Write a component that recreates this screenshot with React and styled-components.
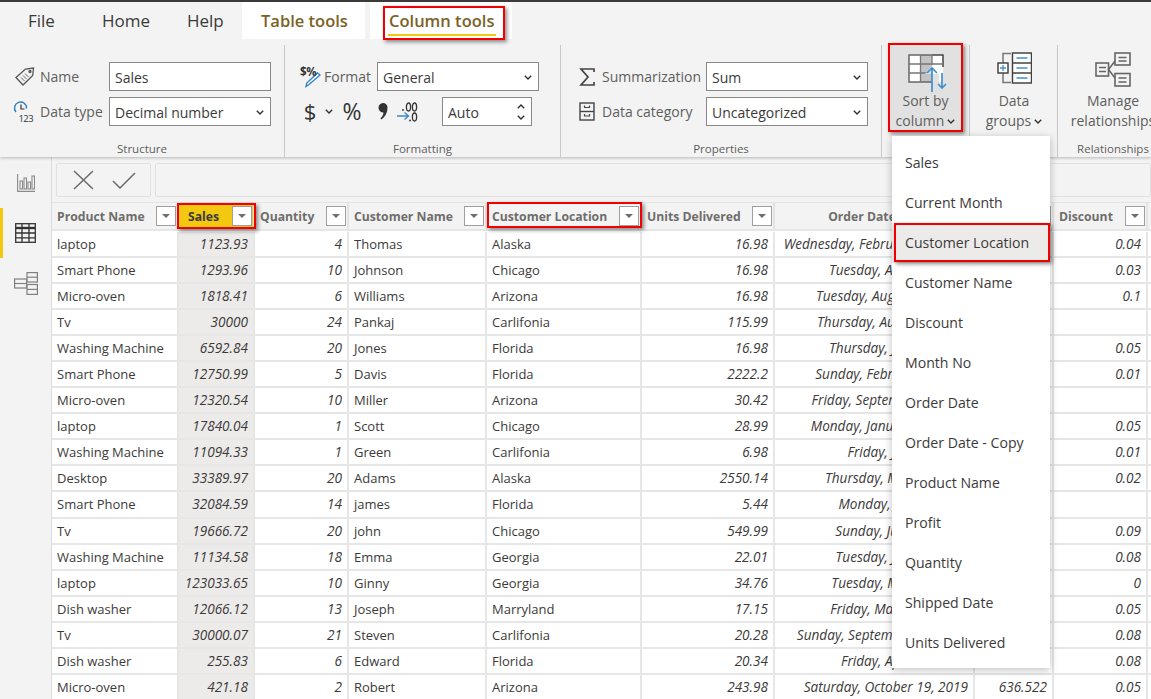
import React from "react";
import styled, { createGlobalStyle } from "styled-components";

const GlobalStyle = createGlobalStyle`
  html, body {
    margin: 0;
    padding: 0;
    background: #ffffff;
  }
  body {
    font-family: "Open Sans", "Noto Sans", sans-serif;
    color: #3b3a39;
    overflow: hidden;
  }
`;

const columns = [
  { key: "product", title: "Product Name", width: 127 },
  { key: "sales", title: "Sales", width: 76, align: "right", selected: true, mark: { top: 0, left: -2, right: -3, bottom: 0 } },
  { key: "qty", title: "Quantity", width: 94, align: "right" },
  { key: "customer", title: "Customer Name", width: 138 },
  { key: "location", title: "Customer Location", width: 155, mark: { top: -1, left: 0, right: -2, bottom: 1 } },
  { key: "units", title: "Units Delivered", width: 133, align: "right" },
  { key: "date", title: "Order Date", width: 200, align: "right", center: true },
  { key: "profit", title: "Profit", width: 79, align: "right" },
  { key: "discount", title: "Discount", width: 94, align: "right" },
  { key: "next", title: "", width: 60 },
];

const rows = [
  ["laptop", "1123.93", "4", "Thomas", "Alaska", "16.98", "Wednesday, February 20, 2019", "", "0.04"],
  ["Smart Phone", "1293.96", "10", "Johnson", "Chicago", "16.98", "Tuesday, April 30, 2019", "", "0.03"],
  ["Micro-oven", "1818.41", "6", "Williams", "Arizona", "16.98", "Tuesday, August 27, 2019", "", "0.1"],
  ["Tv", "30000", "24", "Pankaj", "Carlifonia", "115.99", "Thursday, August 8, 2019", "", ""],
  ["Washing Machine", "6592.84", "20", "Jones", "Florida", "16.98", "Thursday, July 18, 2019", "", "0.05"],
  ["Smart Phone", "12750.99", "5", "Davis", "Florida", "2222.2", "Sunday, February 3, 2019", "", "0.01"],
  ["Micro-oven", "12320.54", "10", "Miller", "Arizona", "30.42", "Friday, September 6, 2019", "", ""],
  ["laptop", "17840.04", "1", "Scott", "Chicago", "28.99", "Monday, January 14, 2019", "", "0.05"],
  ["Washing Machine", "11094.33", "1", "Green", "Carlifonia", "6.98", "Friday, July 12, 2019", "", "0.01"],
  ["Desktop", "33389.97", "20", "Adams", "Alaska", "2550.14", "Thursday, May 16, 2019", "", "0.02"],
  ["Smart Phone", "32084.59", "14", "james", "Florida", "5.44", "Monday, June 3, 2019", "", ""],
  ["Tv", "19666.72", "20", "john", "Chicago", "549.99", "Sunday, June 23, 2019", "", "0.09"],
  ["Washing Machine", "11134.58", "18", "Emma", "Georgia", "22.01", "Tuesday, July 16, 2019", "", "0.08"],
  ["laptop", "123033.65", "10", "Ginny", "Georgia", "34.76", "Tuesday, May 14, 2019", "", "0"],
  ["Dish washer", "12066.12", "13", "Joseph", "Marryland", "17.15", "Friday, March 15, 2019", "", "0.05"],
  ["Tv", "30000.07", "21", "Steven", "Carlifonia", "20.28", "Sunday, September 15, 2019", "", "0.08"],
  ["Dish washer", "255.83", "6", "Edward", "Florida", "20.34", "Friday, April 12, 2019", "", "0.08"],
  ["Micro-oven", "421.18", "2", "Robert", "Arizona", "243.98", "Saturday, October 19, 2019", "636.522", "0.05"],
];

const menuItems = [
  "Sales",
  "Current Month",
  "Customer Location",
  "Customer Name",
  "Discount",
  "Month No",
  "Order Date",
  "Order Date - Copy",
  "Product Name",
  "Profit",
  "Quantity",
  "Shipped Date",
  "Units Delivered",
];

const Chevron = () => (
  <svg width="8" height="5" viewBox="0 0 8 5" fill="none">
    <path d="M.8 .8L4 4l3.200-3.200" stroke="#323130" strokeWidth="1.400" />
  </svg>
);

const TagIcon = () => (
  <svg width="20" height="19" viewBox="0 0 20 19" fill="none" stroke="#555" strokeWidth="1.300">
    <path d="M1 10.500L10.500 2l8-1-.8 7.500L8 18z" />
    <circle cx="15" cy="4.500" r="1" />
    <path d="M6 10.500l3.500 3.500M8 8.500l3.500 3.500M10 6.500l3.500 3.500" strokeWidth=".9" />
  </svg>
);

const TypeIcon = () => (
  <svg width="22" height="22" viewBox="0 0 22 22" fill="none" overflow="visible">
    <path d="M2 11a6 6 0 1 1 10.500-3.500" stroke="#2f7fbd" strokeWidth="1.400" />
    <path d="M7 3.500V8h3.500" stroke="#333" strokeWidth="1.200" />
    <text x="4.500" y="21" fontSize="9.500" letterSpacing="-.6" fill="#333" stroke="none">123</text>
  </svg>
);

const FormatIcon = () => (
  <svg width="21" height="21" viewBox="0 0 21 21" fill="none" overflow="visible">
    <path d="M20 9L9 18.500l-3 2 .8-3.500L17.500 7z" fill="#fff" stroke="#2f85c5" strokeWidth="1.400" />
    <text x="0" y="10" fontSize="11.500" fontWeight="700" letterSpacing="-.4" fill="#333">$%</text>
  </svg>
);

const SumIcon = () => (
  <svg width="16" height="18" viewBox="0 0 16 18" fill="none" stroke="#444" strokeWidth="1.700">
    <path d="M15 4V1H2l7 8-7 8h13v-3" />
  </svg>
);

const CommaIcon = () => (
  <svg width="10" height="17" viewBox="0 0 10 17" fill="#333">
    <path d="M5 0a4.500 4.500 0 0 1 4.500 4.500c0 5-2 9-6 12l-1-1c1.800-2 2.800-3.500 3-6A4.500 4.500 0 1 1 5 0z" />
  </svg>
);

const DecimalIcon = () => (
  <svg width="21" height="20" viewBox="0 0 21 20" fill="none">
    <circle cx="6" cy="8" r=".9" fill="#333" />
    <ellipse cx="11.500" cy="5" rx="2.100" ry="4" stroke="#333" strokeWidth="1.300" />
    <ellipse cx="17.500" cy="5" rx="2.100" ry="4" stroke="#333" strokeWidth="1.300" />
    <path d="M0 14h11M7.500 10.500L11.500 14l-4 3.500" stroke="#3d8ac6" strokeWidth="1.400" />
    <circle cx="13" cy="18.500" r=".9" fill="#333" />
    <ellipse cx="17.500" cy="15" rx="2.100" ry="4" stroke="#333" strokeWidth="1.300" />
  </svg>
);

const CategoryIcon = () => (
  <svg width="16" height="19" viewBox="0 0 16 19" fill="none" stroke="#444" strokeWidth="1.400">
    <rect x="1" y="1" width="14" height="17" />
    <path d="M1 9.500h14" />
    <path d="M5.500 3.500v2h5v-2M5.500 12v2h5v-2" strokeWidth="1.200" />
  </svg>
);

const SortIcon = () => (
  <svg width="40" height="38" viewBox="0 0 40 38" fill="none">
    <rect x="1" y="1" width="34" height="27" fill="#fff" />
    <rect x="12.500" y="1" width="11.500" height="27" fill="#c3c3c3" />
    <path d="M24 1h11v12" stroke="#444" strokeWidth="1.500" />
    <path d="M24 28H1V1h23" stroke="#666" strokeWidth="1.500" />
    <path d="M1 10h34M1 19h20M12.500 1v27M24 1v10" stroke="#777" strokeWidth="1.300" />
    <path d="M24 12l-7 8h14v16h-5z" fill="#e1e1e1" />
    <path d="M24 38V14M19 19l5-5 5 5" stroke="#3e90cf" strokeWidth="1.700" />
    <path d="M34 19v15M30 30l4 4 4-4" stroke="#3e90cf" strokeWidth="1.700" />
  </svg>
);

const GroupsIcon = () => (
  <svg width="35" height="32" viewBox="0 0 35 32" fill="none">
    <path d="M14 1.500H6V11M6 21v9.500h8" stroke="#777" strokeWidth="1.500" />
    <rect x="1" y="11" width="10" height="10" fill="#fff" stroke="#444" strokeWidth="1.500" />
    <path d="M6 13v6M3 16h6" stroke="#3e90cf" strokeWidth="1.300" />
    <rect x="15.500" y="1" width="19" height="30" fill="#fff" stroke="#444" strokeWidth="1.500" />
    <path d="M15.500 11h19M15.500 21h19" stroke="#444" strokeWidth="1.500" />
    <path d="M19.500 6h11M19.500 16h11M19.500 26h11" stroke="#3e90cf" strokeWidth="1.300" />
  </svg>
);

const RelationsIcon = () => (
  <svg width="36" height="35" viewBox="0 0 36 35" fill="none" stroke="#666" strokeWidth="1.600">
    <rect x="1" y="11" width="12.500" height="13" />
    <rect x="20" y="1" width="15" height="12" />
    <rect x="20" y="21.500" width="15" height="12.500" />
    <path d="M20 9l-6.500 8.500L20 26" />
    <path d="M4 15.500h7M4 19.500h7M23.500 5.500h8M23.500 9h8M23.500 26h8M23.500 30h8" strokeWidth="1.300" />
  </svg>
);

const ReportIcon = () => (
  <svg width="18" height="18" viewBox="0 0 18 18" fill="none" stroke="#8a8a8a" strokeWidth="1.100">
    <path d="M.6 0v17.400H18" />
    <rect x="3" y="7" width="2.500" height="8" />
    <rect x="7" y="4" width="2.500" height="11" />
    <rect x="11" y="8" width="2.500" height="7" />
    <rect x="15" y="2" width="2.500" height="13" />
  </svg>
);

const TableIcon = () => (
  <svg width="21" height="20" viewBox="0 0 21 20" fill="none" stroke="#333" strokeWidth="1.300">
    <rect x=".7" y=".7" width="19.600" height="18.600" />
    <path d="M.7 5h19.600" strokeWidth="2.400" />
    <path d="M.7 10h19.600M.7 14.800h19.600M7 1v18M14 1v18" />
  </svg>
);

const ModelIcon = () => (
  <svg width="24" height="23" viewBox="0 0 24 23" fill="none" stroke="#808080" strokeWidth="1.200">
    <rect x=".6" y="7" width="12" height="9" />
    <path d="M.6 11.500h12" />
    <rect x="13" y=".6" width="10.400" height="9.400" />
    <path d="M13 5.200h10.400" />
    <rect x="13" y="12.500" width="10.400" height="9.900" />
    <path d="M13 17.400h10.400" />
  </svg>
);

const Page = styled.div`
  width: 1151px;
  height: 699px;
  overflow: hidden;
  position: relative;
  display: flex;
  flex-direction: column;
  background: #fff;
`;

const Ribbon = styled.header`
  height: 157px;
  flex: none;
  background: #f3f3f3;
  border-top: 2px solid #3a3a3a;
  box-shadow: 0 1px 3px rgba(0, 0, 0, 0.25);
  display: flex;
  flex-direction: column;
  position: relative;
  z-index: 2;
  box-sizing: border-box;
`;

const Tabs = styled.nav`
  display: flex;
  height: 37px;
  flex: none;
`;

const Tab = styled.div`
  position: relative;
  width: ${(p) => p.$w}px;
  margin-right: ${(p) => p.$gap || 0}px;
  box-sizing: border-box;
  padding-left: ${(p) => p.$pad}px;
  font-size: ${(p) => (p.$contextual ? 16.5 : 17)}px;
  line-height: 37px;
  color: ${(p) => (p.$contextual ? "#7a6226" : "#3b3a39")};
  font-weight: ${(p) => (p.$contextual ? 600 : 400)};
  background: ${(p) => (p.$contextual ? "#fff" : "transparent")};
`;

const TabUnderline = styled.span`
  position: absolute;
  left: 18px;
  right: 16px;
  bottom: 3px;
  height: 2px;
  background: #f2c811;
`;

const Annotation = styled.span`
  position: absolute;
  top: ${(p) => p.$top}px;
  left: ${(p) => p.$left}px;
  right: ${(p) => p.$right}px;
  bottom: ${(p) => p.$bottom}px;
  border: 2.5px solid #f00000;
  box-shadow: 2px 2px 4px rgba(0, 0, 0, 0.45);
  pointer-events: none;
  z-index: 5;
`;

const Groups = styled.div`
  display: flex;
  flex: 1;
  padding-top: 6px;
`;

const Group = styled.section`
  position: relative;
  width: ${(p) => p.$w}px;
  flex: none;
  box-sizing: border-box;
  display: flex;
  flex-direction: column;
  border-right: ${(p) => (p.$open ? "none" : "1px solid #c8c8c8")};
`;

const GroupBody = styled.div`
  flex: 1;
  display: flex;
  flex-direction: ${(p) => (p.$row ? "row" : "column")};
  gap: ${(p) => (p.$row ? 0 : 6)}px;
  padding: ${(p) => p.$pad || "17px 0 0 14px"};
`;

const GroupLabel = styled.div`
  font-size: 11.5px;
  line-height: 16px;
  text-align: center;
  color: #605e5c;
`;

const FieldRow = styled.div`
  display: flex;
  align-items: center;
  height: 29px;
`;

const FieldLabel = styled.div`
  display: flex;
  align-items: center;
  gap: ${(p) => p.$gap || 3}px;
  width: ${(p) => p.$w}px;
  flex: none;
  font-size: 14px;
  color: #605e5c;
  white-space: nowrap;
`;

const IconSlot = styled.span`
  display: inline-flex;
  width: 22px;
  flex: none;
  justify-content: center;
`;

const Field = styled.div`
  width: ${(p) => p.$w}px;
  height: 29px;
  margin-left: ${(p) => p.$ml || 0}px;
  box-sizing: border-box;
  background: #fff;
  border: 1px solid #8a8886;
  display: flex;
  align-items: center;
  justify-content: space-between;
  padding: 1px 6px 0 5px;
  font-size: 14px;
  color: #3b3a39;
`;

const FormatTools = styled.div`
  display: flex;
  align-items: center;
  height: 29px;
`;

const Glyph = styled.span`
  font-size: ${(p) => p.$size}px;
  line-height: 29px;
  width: ${(p) => p.$w}px;
  margin-left: ${(p) => p.$ml || 0}px;
  text-align: center;
  color: #333;
`;

const ToolIcon = styled.span`
  display: inline-flex;
  margin-left: ${(p) => p.$ml || 0}px;
`;

const Spin = styled.span`
  display: flex;
  flex-direction: column;
  gap: 6px;
  svg:first-child {
    transform: rotate(180deg);
  }
`;

const BigButton = styled.div`
  position: relative;
  width: ${(p) => p.$w}px;
  height: 87px;
  flex: none;
  box-sizing: border-box;
  display: flex;
  flex-direction: column;
  align-items: center;
  padding-top: 7px;
  font-size: 14px;
  line-height: 20px;
  color: #605e5c;
  white-space: nowrap;
  background: ${(p) => (p.$active ? "#e1e1e1" : "transparent")};
`;

const BigIcon = styled.div`
  height: 39px;
  flex: none;
  box-sizing: border-box;
  padding: ${(p) => p.$top || 0}px 0 0 ${(p) => p.$left || 0}px;
  display: flex;
  align-items: flex-start;
  justify-content: center;
`;

const BigLine = styled.span`
  display: inline-flex;
  align-items: center;
  gap: 3px;
`;

const Body = styled.div`
  flex: 1;
  display: flex;
  min-height: 0;
`;

const Rail = styled.aside`
  width: 51px;
  flex: none;
  background: #f3f3f3;
  border-right: 1px solid #dcdcdc;
  display: flex;
  flex-direction: column;
  padding-top: 1px;
`;

const RailItem = styled.div`
  height: 50px;
  display: flex;
  align-items: center;
  justify-content: center;
  border-left: 3px solid ${(p) => (p.$active ? "#f2c811" : "transparent")};
  box-sizing: border-box;
  padding-right: 3px;
`;

const Content = styled.main`
  flex: 1;
  min-width: 0;
  display: flex;
  flex-direction: column;
`;

const FormulaBar = styled.div`
  height: 46px;
  flex: none;
  background: #f3f3f3;
  display: flex;
  gap: 4px;
  padding: 6px 0 5px 4px;
  box-sizing: border-box;
  border-bottom: 1px solid #e4e4e4;
`;

const FormulaActions = styled.div`
  width: 95px;
  flex: none;
  box-sizing: border-box;
  border: 1px solid #e1e1e1;
  border-radius: 2px;
  display: flex;
  align-items: center;
  gap: 18px;
  padding-left: 16px;
`;

const FormulaInput = styled.div`
  flex: 1;
  border: 1px solid #e1e1e1;
  border-radius: 2px;
`;

const HeaderRow = styled.div`
  display: flex;
  height: 28px;
  margin-bottom: 1px;
  flex: none;
  box-sizing: border-box;
  background: #f3f3f3;
  border-bottom: 2px solid #e6e6e6;
`;

const HeaderCell = styled.div`
  position: relative;
  width: ${(p) => p.$w}px;
  flex: none;
  box-sizing: border-box;
  display: flex;
  align-items: center;
  justify-content: space-between;
  padding: 0 1px 0 ${(p) => (p.$selected ? 9 : 5)}px;
  border-right: 2px solid #e3e3e3;
  font-size: 12.2px;
  font-weight: 700;
  color: ${(p) => (p.$selected ? "#3b3a39" : "#6f6d6b")};
  background: ${(p) => (p.$selected ? "#f2c811" : "transparent")};
  white-space: nowrap;
`;

const HeaderTitle = styled.span`
  flex: 1;
  min-width: 0;
  text-align: ${(p) => (p.$center ? "center" : "left")};
  padding-right: ${(p) => (p.$center ? 8 : 0)}px;
`;

const FilterButton = styled.span`
  width: 20px;
  height: 20px;
  flex: none;
  box-sizing: border-box;
  background: #fff;
  border: 1px solid #a19f9d;
  display: flex;
  align-items: center;
  justify-content: center;
  &::after {
    content: "";
    border-left: 4px solid transparent;
    border-right: 4px solid transparent;
    border-top: 4px solid #6f6d6b;
  }
`;

const DataRow = styled.div`
  display: flex;
  height: 26.05px;
  flex: none;
  box-sizing: border-box;
`;

const DataCell = styled.div`
  width: ${(p) => p.$w}px;
  flex: none;
  box-sizing: border-box;
  padding: 0 5px 0 5px;
  border-right: 2px solid #e6e6e6;
  border-bottom: 2px solid #e6e6e6;
  font-size: ${(p) => (p.$align === "right" ? 13.6 : 13)}px;
  line-height: 24px;
  white-space: nowrap;
  overflow: hidden;
  color: #3b3a39;
  text-align: ${(p) => p.$align || "left"};
  font-style: ${(p) => (p.$align === "right" ? "italic" : "normal")};
  background: ${(p) => (p.$selected ? "#edebe9" : "#fff")};
`;

const Menu = styled.ul`
  position: absolute;
  left: 892px;
  top: 136px;
  width: 158px;
  margin: 0;
  padding: 7px 0 5px;
  list-style: none;
  background: #fff;
  box-shadow: 0 2px 8px rgba(0, 0, 0, 0.25);
  z-index: 3;
`;

const MenuItem = styled.li`
  position: relative;
  height: 40px;
  padding-left: 13px;
  font-size: 14.1px;
  line-height: 40px;
  color: #3b3a39;
  white-space: nowrap;
  background: ${(p) => (p.$active ? "#edebe9" : "transparent")};
`;

function App() {
  return (
    <Page>
      <GlobalStyle />
      <Ribbon>
        <Tabs>
          <Tab $w={83} $pad={28}>File</Tab>
          <Tab $w={86} $pad={19}>Home</Tab>
          <Tab $w={73} $pad={18}>Help</Tab>
          <Tab $w={123} $pad={19} $gap={5} $contextual>Table tools</Tab>
          <Tab $w={142} $pad={19} $contextual>
            Column tools
            <TabUnderline />
            <Annotation $top={4} $left={13} $right={7} $bottom={-1} />
          </Tab>
        </Tabs>
        <Groups>
          <Group $w={285}>
            <GroupBody>
              <FieldRow>
                <FieldLabel $w={95} $gap={4}>
                  <IconSlot><TagIcon /></IconSlot>
                  Name
                </FieldLabel>
                <Field $w={162}>Sales</Field>
              </FieldRow>
              <FieldRow>
                <FieldLabel $w={95} $gap={4}>
                  <IconSlot><TypeIcon /></IconSlot>
                  Data type
                </FieldLabel>
                <Field $w={162}>Decimal number<Chevron /></Field>
              </FieldRow>
            </GroupBody>
            <GroupLabel>Structure</GroupLabel>
          </Group>
          <Group $w={276}>
            <GroupBody>
              <FieldRow>
                <FieldLabel $w={78}>
                  <IconSlot><FormatIcon /></IconSlot>
                  Format
                </FieldLabel>
                <Field $w={162}>General<Chevron /></Field>
              </FieldRow>
              <FormatTools>
                <Glyph $size={22} $w={22}>$</Glyph>
                <ToolIcon $ml={4}><Chevron /></ToolIcon>
                <Glyph $size={23} $w={38}>%</Glyph>
                <ToolIcon $ml={7}><CommaIcon /></ToolIcon>
                <ToolIcon $ml={9}><DecimalIcon /></ToolIcon>
                <Field $w={90} $ml={24}>Auto<Spin><Chevron /><Chevron /></Spin></Field>
              </FormatTools>
            </GroupBody>
            <GroupLabel>Formatting</GroupLabel>
          </Group>
          <Group $w={321}>
            <GroupBody $pad="17px 0 0 15px">
              <FieldRow>
                <FieldLabel $w={130} $gap={4}>
                  <IconSlot><SumIcon /></IconSlot>
                  Summarization
                </FieldLabel>
                <Field $w={162}>Sum<Chevron /></Field>
              </FieldRow>
              <FieldRow>
                <FieldLabel $w={130} $gap={4}>
                  <IconSlot><CategoryIcon /></IconSlot>
                  Data category
                </FieldLabel>
                <Field $w={162}>Uncategorized<Chevron /></Field>
              </FieldRow>
            </GroupBody>
            <GroupLabel>Properties</GroupLabel>
          </Group>
          <Group $w={88}>
            <GroupBody $row $pad="0 0 0 7px">
              <BigButton $w={73} $active>
                <BigIcon $top={2} $left={4}><SortIcon /></BigIcon>
                Sort by
                <BigLine>column <Chevron /></BigLine>
                <Annotation $top={-2} $left={-1} $right={-1} $bottom={0} />
              </BigButton>
            </GroupBody>
          </Group>
          <Group $w={88}>
            <GroupBody $row $pad="0 0 0 5px">
              <BigButton $w={78}>
                <BigIcon><GroupsIcon /></BigIcon>
                Data
                <BigLine>groups <Chevron /></BigLine>
              </BigButton>
            </GroupBody>
          </Group>
          <Group $w={110} $open>
            <GroupBody $row $pad="0 0 0 5px">
              <BigButton $w={100}>
                <BigIcon><RelationsIcon /></BigIcon>
                Manage
                <span>relationships</span>
              </BigButton>
            </GroupBody>
            <GroupLabel>Relationships</GroupLabel>
          </Group>
        </Groups>
      </Ribbon>
      <Body>
        <Rail>
          <RailItem><ReportIcon /></RailItem>
          <RailItem $active><TableIcon /></RailItem>
          <RailItem><ModelIcon /></RailItem>
        </Rail>
        <Content>
          <FormulaBar>
            <FormulaActions>
              <svg width="21" height="20" viewBox="0 0 21 20" fill="none" stroke="#6b6b6b" strokeWidth="1.500">
                <path d="M1 1l19 18M20 1L1 19" />
              </svg>
              <svg width="24" height="17" viewBox="0 0 24 17" fill="none" stroke="#6b6b6b" strokeWidth="1.500">
                <path d="M1 9l7 7L23 1" />
              </svg>
            </FormulaActions>
            <FormulaInput />
          </FormulaBar>
          <HeaderRow>
            {columns.map((c) => (
              <HeaderCell key={c.key} $w={c.width} $selected={c.selected}>
                {c.title && <HeaderTitle $center={c.center}>{c.title}</HeaderTitle>}
                {c.title && <FilterButton />}
                {c.mark && (
                  <Annotation $top={c.mark.top} $left={c.mark.left} $right={c.mark.right} $bottom={c.mark.bottom} />
                )}
              </HeaderCell>
            ))}
          </HeaderRow>
          {rows.map((row, i) => (
            <DataRow key={i}>
              {columns.map((c, j) => (
                <DataCell key={c.key} $w={c.width} $align={c.align} $selected={c.selected}>
                  {row[j] || ""}
                </DataCell>
              ))}
            </DataRow>
          ))}
        </Content>
      </Body>
      <Menu>
        {menuItems.map((item) => (
          <MenuItem key={item} $active={item === "Customer Location"}>
            {item}
            {item === "Customer Location" && <Annotation $top={0} $left={2} $right={0} $bottom={1} />}
          </MenuItem>
        ))}
      </Menu>
    </Page>
  );
}

export default App;
